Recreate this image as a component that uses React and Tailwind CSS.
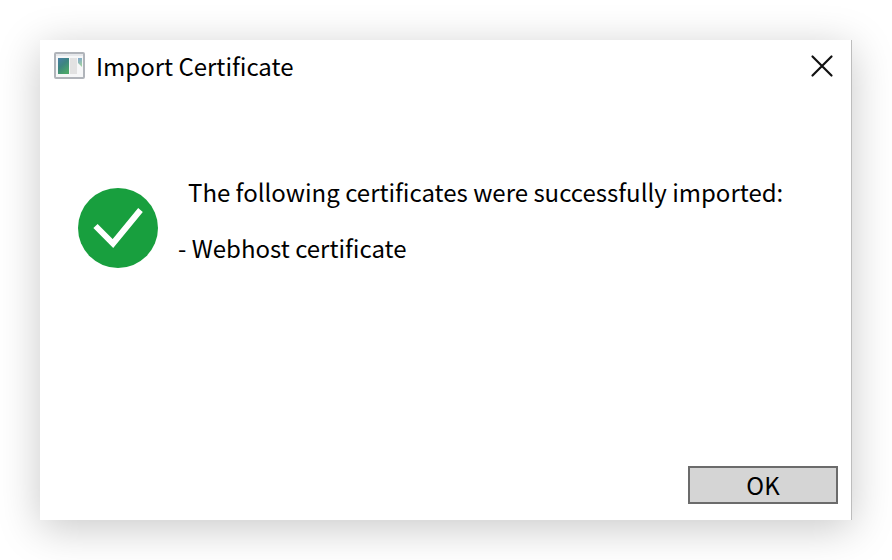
function AppIcon() {
  return (
    <svg className="h-7 w-8 shrink-0" viewBox="0 0 32 28" aria-hidden="true">
      <defs>
        <linearGradient id="pane" x1="0" y1="0" x2="0.6" y2="1">
          <stop offset="0" stopColor="#4a7fa8" />
          <stop offset="0.5" stopColor="#3d8580" />
          <stop offset="1" stopColor="#4ba66a" />
        </linearGradient>
        <linearGradient id="strip" x1="0" y1="0" x2="0.3" y2="1">
          <stop offset="0" stopColor="#7fa6cf" />
          <stop offset="1" stopColor="#9fd0a4" />
        </linearGradient>
      </defs>
      <rect x="1" y="1" width="29" height="25" rx="1" fill="#f6f7f8" stroke="#b0b4ba" strokeWidth="2" />
      <rect x="2" y="2" width="27" height="2" fill="#e6e8eb" />
      <rect x="4" y="6" width="11" height="16" fill="url(#pane)" />
      <rect x="16" y="6" width="7" height="16" fill="#e2e2e2" />
      <path d="M24 6 H28 V15 L24 11 Z" fill="url(#strip)" />
    </svg>
  );
}

function SuccessIcon() {
  return (
    <svg className="h-20 w-20 shrink-0" viewBox="0 0 80 80" role="img" aria-label="Success">
      <circle cx="40" cy="40" r="40" fill="#189f3e" />
      <path d="M17.5 38 L35 55.5 L62.5 22" fill="none" stroke="#fff" strokeWidth="6" />
    </svg>
  );
}

export default function App() {
  return (
    <div className="flex min-h-screen bg-white p-10 font-['Noto_Sans_CJK_TC','Noto_Sans',sans-serif] text-2xl leading-9 text-black">
      <main className="flex flex-1 flex-col border-r border-[#bdbdbd] bg-white shadow-[0_8px_40px_rgba(0,0,0,0.22)]">
        <header className="flex items-center pt-2 pr-[15px] pl-3.5">
          <AppIcon />
          <h1 className="ml-2.5 flex-1">Import Certificate</h1>
          <button type="button" aria-label="Close" className="p-0.5">
            <svg className="h-6 w-6" viewBox="0 0 24 24" fill="none" stroke="#111" strokeWidth="2.2" strokeLinecap="round">
              <path d="M2.5 2.5 L21.5 21.5 M21.5 2.5 L2.5 21.5" />
            </svg>
          </button>
        </header>
        <section className="mt-22.5 flex flex-1 items-start gap-5 pl-9.5">
          <div className="pt-3.5">
            <SuccessIcon />
          </div>
          <div className="flex flex-col gap-5">
            <p className="pl-2.5">The following certificates were successfully imported:</p>
            <p>- Webhost certificate</p>
          </div>
        </section>
        <footer className="flex justify-end pr-[13px] pb-4">
          <button type="button" className="flex h-[38px] w-[150px] items-center justify-center border-2 border-[#6b6b6b] bg-[#d5d5d5]">
            OK
          </button>
        </footer>
      </main>
    </div>
  );
}
